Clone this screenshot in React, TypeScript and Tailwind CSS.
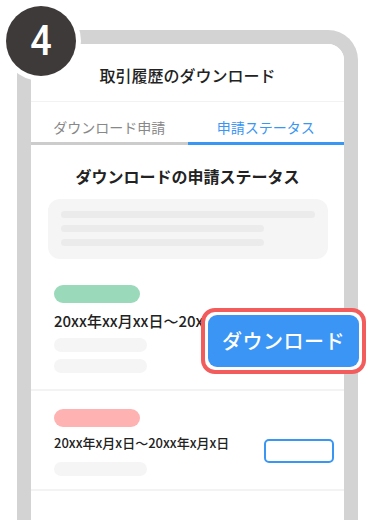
import React from "react";

const jp = { fontFamily: '"Noto Sans CJK JP", "Noto Sans", sans-serif' };

export default function App() {
  return (
    <div className="relative h-[520px] w-[375px] overflow-hidden bg-white" style={jp}>
      <div className="ml-[17px] mt-[30px] h-[560px] w-[341px] rounded-t-[30px] border-[14px] border-b-0 border-[#d3d3d3]">
        <div className="flex h-full flex-col rounded-t-[16px] bg-white">
          {/* header */}
          <div className="flex h-[58px] items-center justify-center border-b border-[#f2f2f2] pt-[4px]">
            <span className="text-[16px] font-medium leading-6 text-[#222]">取引履歴のダウンロード</span>
          </div>
          {/* tabs */}
          <div className="grid grid-cols-2">
            <div className="border-b-[3px] border-[#cccccc] pb-[5px] pt-[15px] text-center text-[14px] leading-5 text-[#888]">
              ダウンロード申請
            </div>
            <div className="border-b-[3px] border-[#3a96f3] pb-[5px] pt-[15px] text-center text-[14px] leading-5 text-[#3a96f3]">
              申請ステータス
            </div>
          </div>
          {/* section title */}
          <div className="mt-[19px] text-center text-[16px] font-bold leading-6 text-[#222]">
            ダウンロードの申請ステータス
          </div>
          {/* info box */}
          <div className="ml-[17px] mr-[16px] mt-[11px] flex h-[60px] flex-col gap-[7px] rounded-[12px] bg-[#f5f5f5] px-[13px] pt-[12px]">
            <div className="h-[7px] w-full rounded-full bg-[#ebebeb]" />
            <div className="h-[7px] w-[203px] rounded-full bg-[#ebebeb]" />
            <div className="h-[7px] w-[203px] rounded-full bg-[#ebebeb]" />
          </div>
          {/* item 1 */}
          <div className="relative border-b-2 border-[#f3f3f3] pb-[16px] pl-[23px] pt-[26px]">
            <div className="h-[18px] w-[86px] rounded-full bg-[#9bd9bb]" />
            <div className="mt-[8px] whitespace-nowrap text-[15px] font-medium leading-5 text-[#222]">
              20xx年xx月xx日〜20xx年xx月xx日
            </div>
            <div className="mt-[7px] h-[14px] w-[93px] rounded-full bg-[#f5f5f5]" />
            <div className="mt-[7px] h-[14px] w-[93px] rounded-full bg-[#f5f5f5]" />
            <div className="absolute left-[170px] top-[49px] h-[66px] w-[165px] rounded-[14px] border-4 border-[#f25c5c] bg-white p-[3px]">
              <div className="flex h-full w-full items-center justify-center rounded-[9px] bg-[#3b95f5] text-[20px] font-medium tracking-[0.5px] text-white">
                ダウンロード
              </div>
            </div>
          </div>
          {/* item 2 */}
          <div className="flex items-start justify-between border-b-2 border-[#f3f3f3] pb-[13px] pl-[23px] pr-[10px] pt-[18px]">
            <div>
              <div className="h-[18px] w-[86px] rounded-full bg-[#ffb2b2]" />
              <div className="mt-[7px] whitespace-nowrap text-[13px] font-medium leading-[18px] text-[#222]">
                20xx年x月x日〜20xx年x月x日
              </div>
              <div className="mt-[10px] h-[14px] w-[93px] rounded-full bg-[#f5f5f5]" />
            </div>
            <div className="mt-[30px] h-[24px] w-[70px] rounded-[5px] border-2 border-[#3a96f3]" />
          </div>
        </div>
      </div>
      {/* badge */}
      <div className="absolute left-[1px] top-[1px] flex h-[80px] w-[80px] items-center justify-center rounded-full bg-white">
        <div className="flex h-[70px] w-[70px] items-center justify-center rounded-full bg-[#3e3a39]">
          <span className="inline-block scale-x-90 text-[42px] font-medium leading-none text-white" style={{ fontFamily: "Roboto, sans-serif" }}>
            4
          </span>
        </div>
      </div>
    </div>
  );
}
